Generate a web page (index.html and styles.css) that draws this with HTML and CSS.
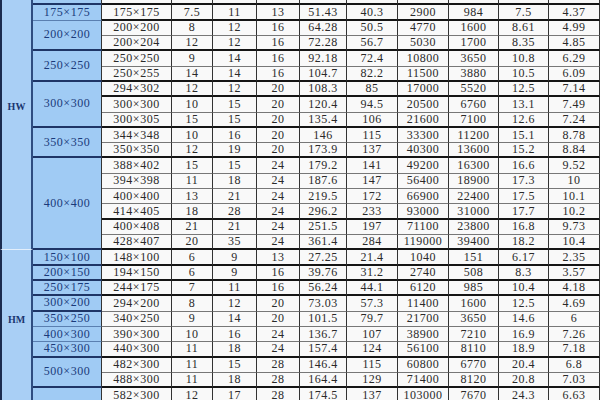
FILE: index.html
```html
<!DOCTYPE html>
<html>
<head>
<meta charset="utf-8">
<link rel="stylesheet" href="styles.css">
</head>
<body>
<div class="t">
  <div class="r e"><div class="k s17 hw">HW</div><div class="n">150×150</div><div class="d">150×150</div><div class="d">7</div><div class="d">10</div><div class="d">13</div><div class="d">40.55</div><div class="d">31.9</div><div class="d">1660</div><div class="d">564</div><div class="d">6.39</div><div class="d">3.73</div></div>
  <div class="r e"><div class="n nl">175×175</div><div class="d">175×175</div><div class="d">7.5</div><div class="d">11</div><div class="d">13</div><div class="d">51.43</div><div class="d">40.3</div><div class="d">2900</div><div class="d">984</div><div class="d">7.5</div><div class="d">4.37</div></div>
  <div class="r"><div class="n s2">200×200</div><div class="d">200×200</div><div class="d">8</div><div class="d">12</div><div class="d">16</div><div class="d">64.28</div><div class="d">50.5</div><div class="d">4770</div><div class="d">1600</div><div class="d">8.61</div><div class="d">4.99</div></div>
  <div class="r e"><div class="d">200×204</div><div class="d">12</div><div class="d">12</div><div class="d">16</div><div class="d">72.28</div><div class="d">56.7</div><div class="d">5030</div><div class="d">1700</div><div class="d">8.35</div><div class="d">4.85</div></div>
  <div class="r"><div class="n s2">250×250</div><div class="d">250×250</div><div class="d">9</div><div class="d">14</div><div class="d">16</div><div class="d">92.18</div><div class="d">72.4</div><div class="d">10800</div><div class="d">3650</div><div class="d">10.8</div><div class="d">6.29</div></div>
  <div class="r e"><div class="d">250×255</div><div class="d">14</div><div class="d">14</div><div class="d">16</div><div class="d">104.7</div><div class="d">82.2</div><div class="d">11500</div><div class="d">3880</div><div class="d">10.5</div><div class="d">6.09</div></div>
  <div class="r e"><div class="n s3">300×300</div><div class="d">294×302</div><div class="d">12</div><div class="d">12</div><div class="d">20</div><div class="d">108.3</div><div class="d">85</div><div class="d">17000</div><div class="d">5520</div><div class="d">12.5</div><div class="d">7.14</div></div>
  <div class="r"><div class="d">300×300</div><div class="d">10</div><div class="d">15</div><div class="d">20</div><div class="d">120.4</div><div class="d">94.5</div><div class="d">20500</div><div class="d">6760</div><div class="d">13.1</div><div class="d">7.49</div></div>
  <div class="r e"><div class="d">300×305</div><div class="d">15</div><div class="d">15</div><div class="d">20</div><div class="d">135.4</div><div class="d">106</div><div class="d">21600</div><div class="d">7100</div><div class="d">12.6</div><div class="d">7.24</div></div>
  <div class="r"><div class="n s2">350×350</div><div class="d">344×348</div><div class="d">10</div><div class="d">16</div><div class="d">20</div><div class="d">146</div><div class="d">115</div><div class="d">33300</div><div class="d">11200</div><div class="d">15.1</div><div class="d">8.78</div></div>
  <div class="r e"><div class="d">350×350</div><div class="d">12</div><div class="d">19</div><div class="d">20</div><div class="d">173.9</div><div class="d">137</div><div class="d">40300</div><div class="d">13600</div><div class="d">15.2</div><div class="d">8.84</div></div>
  <div class="r"><div class="n s6">400×400</div><div class="d">388×402</div><div class="d">15</div><div class="d">15</div><div class="d">24</div><div class="d">179.2</div><div class="d">141</div><div class="d">49200</div><div class="d">16300</div><div class="d">16.6</div><div class="d">9.52</div></div>
  <div class="r"><div class="d">394×398</div><div class="d">11</div><div class="d">18</div><div class="d">24</div><div class="d">187.6</div><div class="d">147</div><div class="d">56400</div><div class="d">18900</div><div class="d">17.3</div><div class="d">10</div></div>
  <div class="r"><div class="d">400×400</div><div class="d">13</div><div class="d">21</div><div class="d">24</div><div class="d">219.5</div><div class="d">172</div><div class="d">66900</div><div class="d">22400</div><div class="d">17.5</div><div class="d">10.1</div></div>
  <div class="r e"><div class="d">414×405</div><div class="d">18</div><div class="d">28</div><div class="d">24</div><div class="d">296.2</div><div class="d">233</div><div class="d">93000</div><div class="d">31000</div><div class="d">17.7</div><div class="d">10.2</div></div>
  <div class="r"><div class="d">400×408</div><div class="d">21</div><div class="d">21</div><div class="d">24</div><div class="d">251.5</div><div class="d">197</div><div class="d">71100</div><div class="d">23800</div><div class="d">16.8</div><div class="d">9.73</div></div>
  <div class="r e"><div class="d">428×407</div><div class="d">20</div><div class="d">35</div><div class="d">24</div><div class="d">361.4</div><div class="d">284</div><div class="d">119000</div><div class="d">39400</div><div class="d">18.2</div><div class="d">10.4</div></div>
  <div class="r e"><div class="k s10 hm">HM</div><div class="n">150×100</div><div class="d">148×100</div><div class="d">6</div><div class="d">9</div><div class="d">13</div><div class="d">27.25</div><div class="d">21.4</div><div class="d">1040</div><div class="d">151</div><div class="d">6.17</div><div class="d">2.35</div></div>
  <div class="r e"><div class="n">200×150</div><div class="d">194×150</div><div class="d">6</div><div class="d">9</div><div class="d">16</div><div class="d">39.76</div><div class="d">31.2</div><div class="d">2740</div><div class="d">508</div><div class="d">8.3</div><div class="d">3.57</div></div>
  <div class="r e"><div class="n">250×175</div><div class="d">244×175</div><div class="d">7</div><div class="d">11</div><div class="d">16</div><div class="d">56.24</div><div class="d">44.1</div><div class="d">6120</div><div class="d">985</div><div class="d">10.4</div><div class="d">4.18</div></div>
  <div class="r"><div class="n">300×200</div><div class="d">294×200</div><div class="d">8</div><div class="d">12</div><div class="d">20</div><div class="d">73.03</div><div class="d">57.3</div><div class="d">11400</div><div class="d">1600</div><div class="d">12.5</div><div class="d">4.69</div></div>
  <div class="r"><div class="n nl">350×250</div><div class="d">340×250</div><div class="d">9</div><div class="d">14</div><div class="d">20</div><div class="d">101.5</div><div class="d">79.7</div><div class="d">21700</div><div class="d">3650</div><div class="d">14.6</div><div class="d">6</div></div>
  <div class="r"><div class="n nl">400×300</div><div class="d">390×300</div><div class="d">10</div><div class="d">16</div><div class="d">24</div><div class="d">136.7</div><div class="d">107</div><div class="d">38900</div><div class="d">7210</div><div class="d">16.9</div><div class="d">7.26</div></div>
  <div class="r e"><div class="n">450×300</div><div class="d">440×300</div><div class="d">11</div><div class="d">18</div><div class="d">24</div><div class="d">157.4</div><div class="d">124</div><div class="d">56100</div><div class="d">8110</div><div class="d">18.9</div><div class="d">7.18</div></div>
  <div class="r"><div class="n s2">500×300</div><div class="d">482×300</div><div class="d">11</div><div class="d">15</div><div class="d">28</div><div class="d">146.4</div><div class="d">115</div><div class="d">60800</div><div class="d">6770</div><div class="d">20.4</div><div class="d">6.8</div></div>
  <div class="r e"><div class="d">488×300</div><div class="d">11</div><div class="d">18</div><div class="d">28</div><div class="d">164.4</div><div class="d">129</div><div class="d">71400</div><div class="d">8120</div><div class="d">20.8</div><div class="d">7.03</div></div>
  <div class="r"><div class="n last"></div><div class="d">582×300</div><div class="d">12</div><div class="d">17</div><div class="d">28</div><div class="d">174.5</div><div class="d">137</div><div class="d">103000</div><div class="d">7670</div><div class="d">24.3</div><div class="d">6.63</div></div>
</div>
</body>
</html>
```
FILE: styles.css
```css
html, body {
  margin: 0;
  padding: 0;
  width: 600px;
  height: 400px;
  overflow: hidden;
  background: #fafafa;
}
.t {
  display: grid;
  grid-template-columns: 33px 69px 70px 41px 44px 43px 47px 51px 51px 50px 50px 51px;
  grid-auto-rows: 15.32px;
  margin-top: -9.96px;
  font-family: "Liberation Serif", serif;
  font-size: 12px;
  letter-spacing: 0.5px;
  color: #2a2a2a;
}
.r { display: contents; }
.d, .n, .k {
  display: flex;
  align-items: center;
  justify-content: center;
  box-sizing: border-box;
  white-space: nowrap;
  overflow: hidden;
}
.d {
  background: #f9f9f9;
  border-right: 1px solid #333;
  border-bottom: 1px solid #777;
}
.r.e > .d { border-bottom: 2px solid #151515; }
.k {
  background: #a9cff5;
  border-left: 2px solid #1b2b4f;
  border-right: 2px solid #2f4d80;
  border-bottom: 1px solid #e2eefb;
  color: #1a3670;
  font-weight: bold;
  font-size: 10px;
  letter-spacing: 0;
}
.hw { padding-bottom: 26px; }
.hm { padding-bottom: 14px; border-bottom: none; }
.n {
  background: #a0cbf4;
  border-right: 1px solid #333;
  border-bottom: 2px solid #1e3566;
  color: #1a3a7a;
}
.n.nl { border-bottom: 1px solid #5a7fb0; }
.n.last { border-bottom: none; }
.s2 { grid-row: span 2; }
.s3 { grid-row: span 3; }
.s6 { grid-row: span 6; }
.s10 { grid-row: span 10; }
.s17 { grid-row: span 17; }
```
